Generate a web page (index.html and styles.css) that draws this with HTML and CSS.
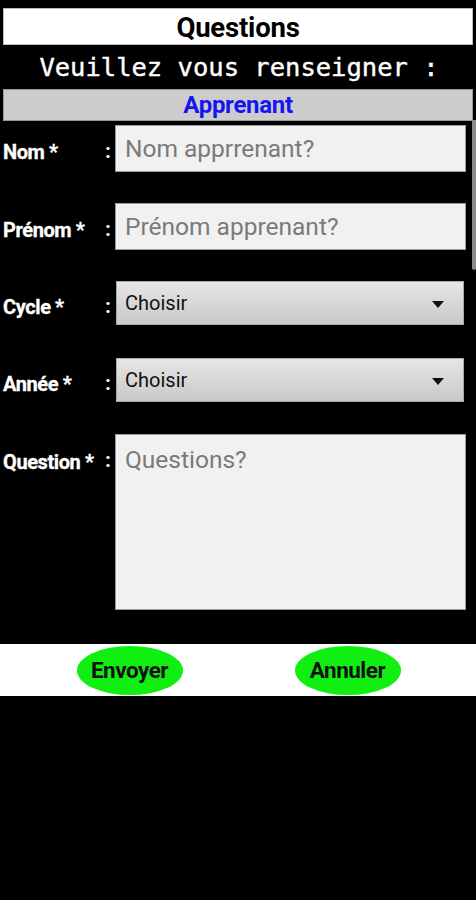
FILE: index.html
```html
<!DOCTYPE html>
<html lang="fr">
  <head>
    <meta charset="UTF-8" />
    <meta name="viewport" content="width=device-width, initial-scale=1.0" />
    <title>Questions</title>
    <link rel="stylesheet" href="styles.css">
  </head>

  <body>
    <header class="titre">
      <h1>Questions</h1>
    </header>
    <p class="consigne">Veuillez vous renseigner :</p>
    <div class="section">Apprenant</div>

    <form class="formulaire" id="questionForm">
      <div class="ligne">
        <label class="libelle">Nom *</label>
        <span class="deux-points">:</span>
        <input class="champ" type="text" placeholder="Nom apprrenant?" />
      </div>
      <div class="ligne">
        <label class="libelle">Prénom *</label>
        <span class="deux-points">:</span>
        <input class="champ" type="text" placeholder="Prénom apprenant?" />
      </div>
      <div class="ligne">
        <label class="libelle">Cycle *</label>
        <span class="deux-points">:</span>
        <div class="liste">
          <span>Choisir</span>
          <span class="fleche"></span>
        </div>
      </div>
      <div class="ligne">
        <label class="libelle">Année *</label>
        <span class="deux-points">:</span>
        <div class="liste">
          <span>Choisir</span>
          <span class="fleche"></span>
        </div>
      </div>
      <div class="ligne ligne-question">
        <label class="libelle">Question *</label>
        <span class="deux-points">:</span>
        <textarea class="champ zone" placeholder="Questions?"></textarea>
      </div>
    </form>

    <div class="boutons">
      <button class="bouton" type="submit" form="questionForm">Envoyer</button>
      <button class="bouton" type="reset" form="questionForm">Annuler</button>
    </div>

    <div class="defilement"></div>
  </body>
</html>
```

FILE: styles.css
```css
* {
  margin: 0;
  box-sizing: border-box;
}

body {
  background-color: black;
  font-family: Roboto, "Liberation Sans", sans-serif;
  position: relative;
  min-height: 900px;
}

.titre {
  background-color: white;
  margin: 8px 3px 0 3px;
  height: 37px;
  display: flex;
  align-items: center;
  justify-content: center;
  border: 1px solid #bbb;
}

.titre h1 {
  font-size: 27.5px;
  font-weight: bold;
  color: black;
  letter-spacing: -0.2px;
  padding-top: 1px;
}

.consigne {
  height: 44px;
  display: flex;
  align-items: center;
  justify-content: center;
  color: white;
  font-family: "DejaVu Sans Mono", "Liberation Mono", monospace;
  font-size: 25.5px;
  padding-left: 2px;
  -webkit-text-stroke: 0.4px white;
}

.section {
  background-color: #cccccc;
  margin: 0 3px;
  height: 32px;
  display: flex;
  align-items: center;
  justify-content: center;
  color: #1515f0;
  font-size: 24px;
  font-weight: bold;
  letter-spacing: -0.3px;
  border: 1px solid #999;
}

.formulaire {
  padding-top: 4px;
  display: flex;
  flex-direction: column;
}

.ligne {
  display: grid;
  grid-template-columns: 102px 13px 351px;
  align-items: center;
  height: 47px;
}

.ligne + .ligne {
  margin-top: 31px;
}

.ligne:nth-child(3),
.ligne:nth-child(4) {
  height: 44px;
}

.ligne:nth-child(4) {
  margin-top: 33px;
}

.ligne:nth-child(5) {
  margin-top: 32px;
}

.libelle {
  color: white;
  font-size: 20px;
  font-weight: bold;
  padding-left: 3px;
  letter-spacing: -0.4px;
  padding-top: 7px;
  white-space: nowrap;
  -webkit-text-stroke: 0.3px white;
}

.deux-points {
  color: white;
  font-size: 21px;
  font-weight: bold;
  padding-left: 3px;
  padding-top: 5px;
}

.champ {
  height: 47px;
  background-color: #f1f1f1;
  border: 1px solid #9a9a9a;
  font-family: Roboto, "Liberation Sans", sans-serif;
  font-size: 24.5px;
  padding: 0 9px;
  color: #333;
}

.champ::placeholder {
  color: #7a7a7a;
}

.liste {
  height: 44px;
  margin-left: 1px;
  width: 348px;
  background: linear-gradient(#e6e6e6, #c9c9c9);
  border: 1px solid #a8a8a8;
  display: flex;
  align-items: center;
  justify-content: space-between;
  padding: 0 19px 0 8px;
  font-size: 20px;
  color: #111;
}

.fleche {
  width: 0;
  height: 0;
  border-left: 6px solid transparent;
  border-right: 6px solid transparent;
  border-top: 7px solid #111;
  margin-top: 2px;
}

.ligne-question {
  height: 176px;
  align-items: start;
}

.ligne-question .libelle {
  padding-top: 16px;
}

.ligne-question .deux-points {
  padding-top: 14px;
}

.zone {
  height: 176px;
  resize: none;
  padding-top: 10px;
}

.boutons {
  margin-top: 34px;
  background-color: white;
  height: 52px;
  display: flex;
  align-items: center;
  justify-content: center;
  gap: 112px;
  padding-left: 1px;
}

.bouton {
  width: 106px;
  height: 49px;
  border-radius: 50%;
  border: none;
  background-color: #11ee11;
  font-family: Roboto, "Liberation Sans", sans-serif;
  font-size: 22.5px;
  font-weight: bold;
  color: #111;
  letter-spacing: -0.5px;
}

.defilement {
  position: absolute;
  top: 120px;
  right: 0;
  width: 4px;
  height: 150px;
  background-color: #8a8a8a;
  border-radius: 0 0 3px 3px;
}
```
